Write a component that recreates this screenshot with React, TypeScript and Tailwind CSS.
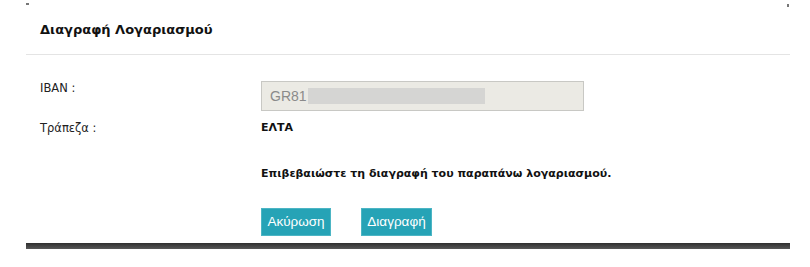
const VERDANA = "font-['DejaVu_Sans',Verdana,sans-serif]";
const ARIAL = "font-['Liberation_Sans',Arial,sans-serif]";

function FormRow({ label, children }: { label: string; children: React.ReactNode }) {
  return (
    <div className="grid grid-cols-[221px_1fr] items-start">
      <span className={`${VERDANA} text-[11.5px] leading-[14px] text-[#222]`}>{label}</span>
      <div>{children}</div>
    </div>
  );
}

export default function App() {
  return (
    <div className="h-[267px] w-[810px] bg-white">
      <div className="relative ml-[26px] w-[764px] bg-white">
        <span className="absolute left-0 top-[3px] h-[2px] w-[3px] bg-[#777]" aria-hidden />
        <span className="absolute right-[1px] top-[4px] h-[3px] w-[2px] bg-[#777]" aria-hidden />

        <div className="border-b border-[#e4e4e4] pb-[14px] pl-[14px] pt-[20px]">
          <h2 className={`${VERDANA} text-[13px] font-bold leading-[20px] text-[#111]`}>
            Διαγραφή Λογαριασμού
          </h2>
        </div>

        <div className="flex flex-col pl-[14px] pt-[26px]">
          <FormRow label="IBAN :">
            <div className="flex h-[30px] w-[323px] items-center border border-[#c8c8c4] bg-[#ebeae4] pl-[8px]">
              <span className={`${ARIAL} text-[14px] text-[#8a8a8a]`}>GR81</span>
              <span className="ml-[1px] h-[16px] w-[177px] bg-[#d5d5d3]" aria-hidden />
            </div>
          </FormRow>

          <div className="mt-[10px]">
            <FormRow label="Τράπεζα :">
              <span className={`${VERDANA} block text-[11px] font-bold leading-[14px] text-[#111]`}>ΕΛΤΑ</span>
            </FormRow>
          </div>

          <p className={`${VERDANA} ml-[221px] mt-[31px] text-[11px] font-bold leading-[16px] text-[#111]`}>
            Επιβεβαιώστε τη διαγραφή του παραπάνω λογαριασμού.
          </p>

          <div className="ml-[221px] mt-[26px] flex gap-[30px]">
            <button className={`${ARIAL} h-[28px] w-[70px] border border-[#4cb5c4] bg-[#26a3b6] text-[13.5px] text-white`}>
              Ακύρωση
            </button>
            <button className={`${ARIAL} h-[28px] w-[71px] border border-[#4cb5c4] bg-[#26a3b6] text-[13.5px] text-white`}>
              Διαγραφή
            </button>
          </div>
        </div>

        <div className="mt-[7px] h-[6px] bg-gradient-to-b from-[#2f2f2f] to-[#585858]" />
      </div>
    </div>
  );
}
